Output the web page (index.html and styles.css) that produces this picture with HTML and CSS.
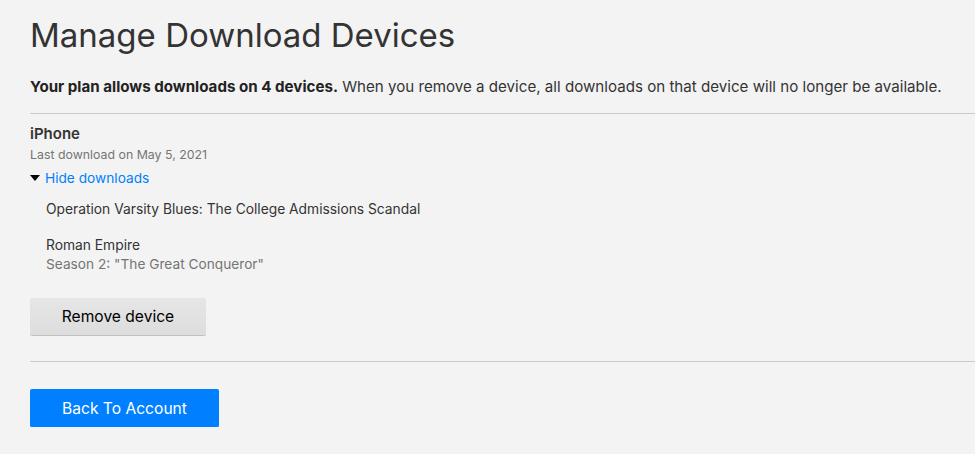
FILE: index.html
```html
<!DOCTYPE html>
<html>
<head>
<meta charset="utf-8">
<link rel="stylesheet" href="styles.css">
</head>
<body>
<div class="page">
  <h1 class="title">Manage Download Devices</h1>
  <p class="intro"><strong>Your plan allows downloads on 4 devices.</strong> When you remove a device, all downloads on that device will no longer be available.</p>
  <div class="device">
    <div class="device-name">iPhone</div>
    <div class="device-meta">Last download on May 5, 2021</div>
    <div class="toggle"><span class="caret"></span><a class="toggle-link">Hide downloads</a></div>
    <ul class="downloads">
      <li class="dl"><div class="dl-title">Operation Varsity Blues: The College Admissions Scandal</div></li>
      <li class="dl"><div class="dl-title">Roman Empire</div><div class="dl-sub">Season 2: "The Great Conqueror"</div></li>
    </ul>
    <button class="btn btn-gray">Remove device</button>
  </div>
  <div class="footer">
    <button class="btn btn-blue">Back To Account</button>
  </div>
</div>
</body>
</html>
```
FILE: styles.css
```css
html, body { margin: 0; padding: 0; }
body {
  background: #f3f3f3;
  font-family: Inter, "Noto Sans", sans-serif;
  color: #333;
}
.page { padding: 0 0 0 30px; }
.title {
  margin: 0;
  padding-top: 15px;
  font-size: 33px;
  font-weight: 400;
  line-height: 40px;
  color: #333;
}
.intro {
  margin: 0;
  padding: 22px 0 16px;
  font-size: 15.13px;
  line-height: 20px;
  color: #333;
  border-bottom: 1px solid #ccc;
}
.intro strong { font-weight: 700; color: #222; }
.device {
  padding: 10px 0 26px;
  border-bottom: 1px solid #ccc;
}
.device-name { font-size: 15px; font-weight: 600; line-height: 20px; color: #333; }
.device-meta { font-size: 12.35px; line-height: 18px; color: #757575; margin-top: 2px; }
.toggle { display: flex; align-items: center; margin-top: 5px; font-size: 13.7px; line-height: 18px; }
.caret {
  width: 0; height: 0;
  border-left: 5px solid transparent;
  border-right: 5px solid transparent;
  border-top: 6px solid #000;
  margin-right: 5px;
}
.toggle-link { color: #0080ff; }
.downloads { list-style: none; margin: 0; padding: 13px 0 0 16px; }
.dl { margin-bottom: 17px; }
.dl-title { font-size: 13.8px; line-height: 19px; color: #333; }
.dl-sub { font-size: 13.7px; line-height: 19px; color: #757575; }
.btn {
  font-family: inherit;
  font-size: 15.6px;
  border: 0;
  border-radius: 2px;
  display: block;
  cursor: pointer;
}
.btn-gray {
  margin-top: 24px;
  width: 176px;
  height: 37px;
  background: linear-gradient(#e6e6e6, #dddddd);
  color: #000;
  box-shadow: 0 1px 0 rgba(0,0,0,0.2);
}
.footer { padding-top: 27px; }
.btn-blue {
  width: 189px;
  height: 38px;
  background: #0080ff;
  color: #fff;
  box-shadow: 0 1px 0 rgba(0,0,0,0.25);
}
```
